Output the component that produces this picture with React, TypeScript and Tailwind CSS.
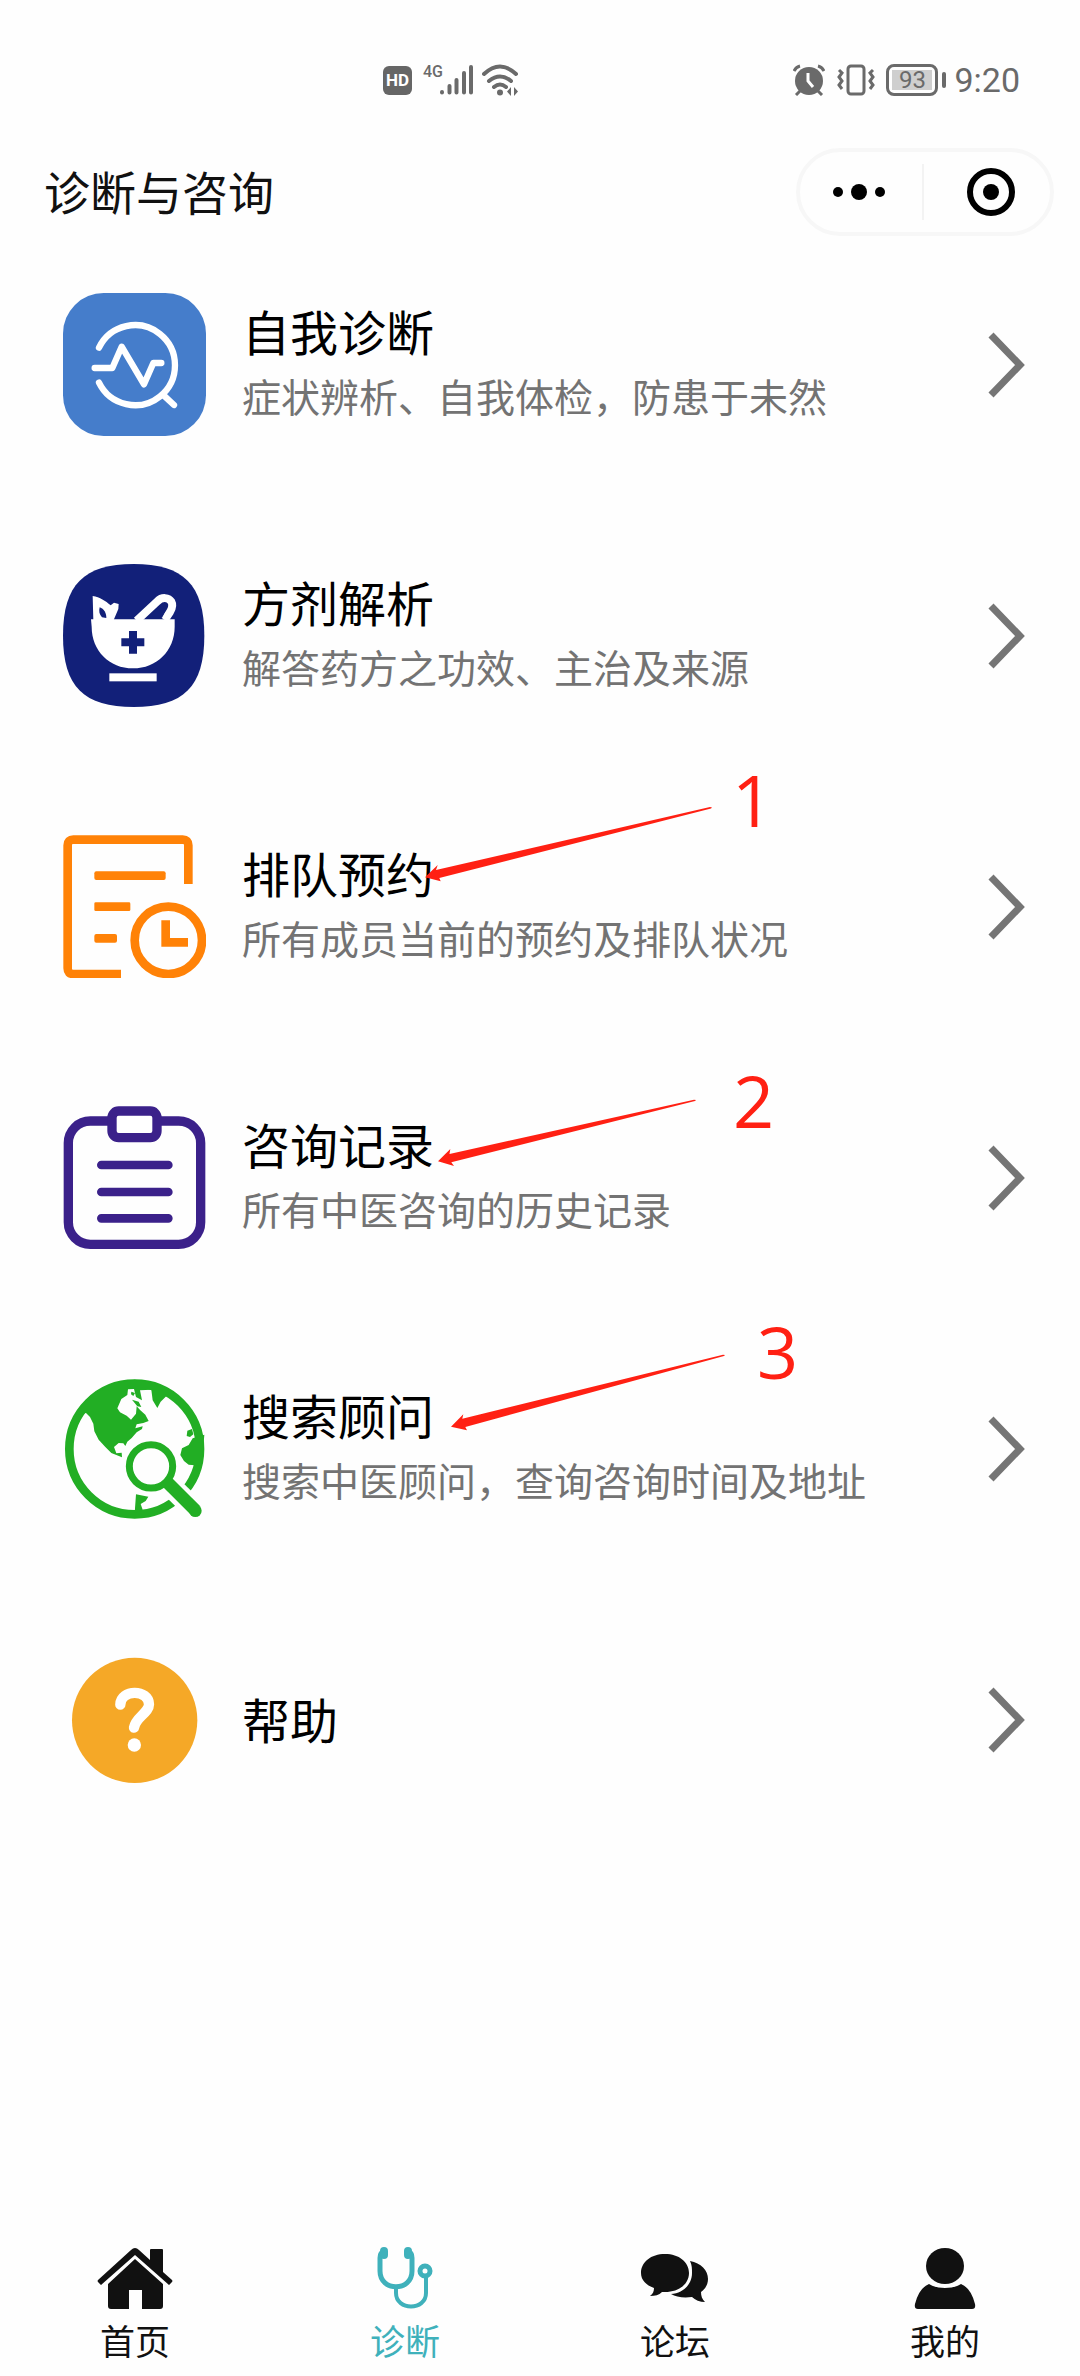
/**
 * Diagnosis & consultation page
 * Status bar, mini-program header, feature list and bottom tab bar
 */

import React from 'react';

type IconProps = { className?: string };

// ---------- feature icons ----------

const SelfCheckIcon: React.FC<IconProps> = ({ className }) => (
  <svg className={className} viewBox="69 66 429 429" fill="none" aria-hidden="true">
    <rect x="69" y="66" width="429" height="429" rx="122" fill="#457dcb" />
    <g stroke="#fff" strokeWidth="19" strokeLinecap="round" strokeLinejoin="round">
      <path d="M177 230A120 120 0 1 1 177 335" />
      <path d="M164 291H217L245 227L312 340L340 276H364" />
      <path d="M371 373L402 402" />
    </g>
  </svg>
);

const FormulaIcon: React.FC<IconProps> = ({ className }) => (
  <svg className={className} viewBox="69 70 429 429" fill="none" aria-hidden="true">
    <path
      d="M281 70C430 70 493 132 493 285S430 499 281 499S69 438 69 285S132 70 281 70Z"
      fill="#122079"
    />
    <path
      d="M153 236H404V258C404 330 350 383 279 383S155 330 155 258Z"
      fill="#fff"
    />
    <path d="M160 238L158 166C180 170 196 180 212 194L222 186L236 190L235 205L221 238Z" fill="#fff" />
    <path d="M179 200C192 205 199 216 199 232L186 230C178 222 176 212 179 200Z" fill="#122079" />
    <path
      d="M290 240L352 182C366 168 386 170 394 183C400 194 396 204 390 214L374 238"
      stroke="#fff"
      strokeWidth="24"
      strokeLinejoin="round"
    />
    <path d="M316 235L366 190C376 183 385 192 381 202L366 231Z" fill="#122079" />
    <path d="M267 271H291V293H313V317H291V339H267V317H244V293H267Z" fill="#122079" />
    <rect x="208" y="398" width="142" height="24" fill="#fff" />
  </svg>
);

const QueueIcon: React.FC<IconProps> = ({ className }) => (
  <svg className={className} viewBox="69 75 429 429" fill="none" aria-hidden="true">
    <g stroke="#ff8207" strokeWidth="26">
      <path d="M243 492H100Q83 492 83 475V106Q83 89 100 89H428Q445 89 445 106V222" />
      <circle cx="385" cy="391" r="101" />
      <path d="M377 331V397H444" />
    </g>
    <g fill="#ff8207">
      <rect x="163" y="184" width="214" height="26" rx="6" />
      <rect x="163" y="277" width="108" height="26" rx="4" />
      <rect x="163" y="372" width="68" height="26" rx="6" />
    </g>
  </svg>
);

const RecordIcon: React.FC<IconProps> = ({ className }) => (
  <svg className={className} viewBox="69 47 429 429" fill="none" aria-hidden="true">
    <g stroke="#3b218a" strokeWidth="28" strokeLinecap="round">
      <rect x="85" y="92" width="397" height="370" rx="66" />
      <rect x="216" y="62" width="135" height="80" rx="20" fill="#fff" />
      <path d="M184 224H385M184 305H385M184 384H385" strokeWidth="26" />
    </g>
  </svg>
);

const SearchGlobeIcon: React.FC<IconProps> = ({ className }) => (
  <svg className={className} viewBox="69 52 429 429" fill="none" aria-hidden="true">
    <circle cx="284" cy="268" r="196" stroke="#22ae24" strokeWidth="26" />
    <g fill="#22ae24">
      <path d="M105 165L138 160L150 172L160 192L163 215L176 240L196 262L214 280L246 293L245 279L229 281L222 262L236 250L250 251L256 259L262 246L275 235L290 218L306 208L308 200L286 206L290 194L310 190L326 184L316 165L301 152L290 140L288 162L273 180L260 168L240 158L232 146L244 118L262 106L264 89L282 88L288 112L306 122L300 92L334 90L338 122L352 145L362 126L380 108L345 70L284 60L215 72L150 110Z" />
      <path d="M274 96L285 100L280 109L273 104ZM276 120L296 126L304 142L292 140Z" />
      <path d="M493 225L458 236L446 256L426 266L421 286L432 304L446 315L485 318Z" />
      <path d="M442 213L456 208L460 224L450 232L440 229Z" />
      <path d="M288 404L325 411L317 424L302 433L308 450L284 460Z" />
    </g>
    <circle cx="333" cy="320" r="86" fill="#fefefe" />
    <path d="M370 358L500 485" stroke="#fefefe" strokeWidth="66" />
    <circle cx="333" cy="320" r="65" stroke="#22ae24" strokeWidth="21" />
    <path d="M384 370L466 452" stroke="#22ae24" strokeWidth="38" />
    <circle cx="466" cy="453" r="19" fill="#22ae24" />
  </svg>
);

const HelpIcon: React.FC<IconProps> = ({ className }) => (
  <svg className={className} viewBox="69 25 429 429" fill="none" aria-hidden="true">
    <circle cx="284" cy="242" r="188" fill="#f5a827" />
    <path
      d="M241 195C241 148 327 148 327 194C327 220 287 232 282 264"
      stroke="#fff"
      strokeWidth="31"
      strokeLinecap="round"
    />
    <circle cx="283" cy="316" r="20" fill="#fff" />
  </svg>
);

const Chevron: React.FC<IconProps> = ({ className }) => (
  <svg className={className} viewBox="0 0 40 72" fill="none" aria-hidden="true">
    <path d="M4 6L33 36L4 66" stroke="#757575" strokeWidth="7" />
  </svg>
);

// ---------- tab bar icons ----------

const HomeIcon: React.FC<IconProps> = ({ className }) => (
  <svg className={className} viewBox="0 0 80 64" fill="currentColor" aria-hidden="true">
    <path d="M40 2Q42 2 44 4L55 14V4Q55 3 56 3H67Q68 3 68 4V26L77 34Q78 35 77 36L74 39L40 9L6 39L3 36Q2 35 3 34L36 4Q38 2 40 2Z" />
    <path d="M40 13L68 38V60Q68 63 65 63H47V44H34V63H16Q13 63 13 60V38Z" />
  </svg>
);

const StethoscopeIcon: React.FC<IconProps> = ({ className }) => (
  <svg className={className} viewBox="0 0 80 64" fill="none" stroke="currentColor" aria-hidden="true">
    <g strokeWidth="5" strokeLinecap="round">
      <path d="M19 6Q15 6 15 12V25C15 46 47 46 47 25V12Q47 6 43 6" />
      <path d="M31 42V47C31 65 61 65 61 47V31" strokeWidth="4" />
      <circle cx="60" cy="25" r="5" />
    </g>
    <path d="M19 5V9M43 5V9" strokeWidth="8" strokeLinecap="round" />
  </svg>
);

const ForumIcon: React.FC<IconProps> = ({ className }) => (
  <svg className={className} viewBox="0 0 80 64" fill="currentColor" aria-hidden="true">
    <path d="M30 8C44 8 54 16 54 27S44 46 30 46H27C24 49 20 50 15 50C18 48 19 45 19 42C11 39 6 34 6 27C6 16 16 8 30 8Z" />
    <path d="M55 15C66 17 73 24 73 33C73 39 70 43 66 46C66 50 67 53 70 56C65 56 60 54 57 51C48 52 41 51 36 48C49 47 57 38 57 27C57 23 57 19 55 15Z" />
  </svg>
);

const PersonIcon: React.FC<IconProps> = ({ className }) => (
  <svg className={className} viewBox="0 0 80 64" fill="currentColor" aria-hidden="true">
    <ellipse cx="40" cy="20" rx="19" ry="18" />
    <path d="M24 38Q30 42 40 42T56 38Q66 42 70 58Q71 63 67 63H13Q9 63 10 58Q14 42 24 38Z" />
  </svg>
);

// ---------- status bar ----------

const StatusBar = () => (
  <div className="flex h-[100px] items-center justify-between pt-[60px] pr-[60px] pl-[383px] text-[#6a6a6a]">
    <div className="flex h-8 items-end">
      <span className="mb-px flex h-[29px] w-[29px] items-center justify-center rounded-md bg-[#666] font-['Roboto',sans-serif] text-[17px] font-bold text-white">
        HD
      </span>
      <span className="ml-[11px] w-[17px] self-start font-['Roboto',sans-serif] text-[16px] leading-4 font-medium">
        4G
      </span>
      <svg className="h-8 w-[34px]" viewBox="0 0 34 32" stroke="currentColor" strokeWidth="4" strokeLinecap="round" aria-hidden="true">
        <path d="M2 28V28.5M9.500 22V28.500M16.500 16V28.500M24 9V28.500M31 3V28.500" />
      </svg>
      <svg className="ml-2 h-8 w-[38px]" viewBox="0 0 38 32" fill="none" stroke="currentColor" strokeWidth="4" strokeLinecap="round" aria-hidden="true">
        <path d="M2 10Q18 -5 34 10M7 17Q18 8 29 17M12 23Q18 18 24 23" />
        <circle cx="18" cy="28.500" r="3" fill="currentColor" stroke="none" />
        <path d="M29 23L25 27.500L29 32ZM32 23L36 27.500L32 32Z" fill="currentColor" stroke="none" />
      </svg>
    </div>

    <div className="flex h-8 items-center">
      <svg className="h-8 w-8" viewBox="0 0 32 32" fill="none" stroke="currentColor" strokeWidth="3" aria-hidden="true">
        <circle cx="16" cy="17" r="14" fill="currentColor" stroke="none" />
        <path d="M1 7Q3 3 7 2M25 2Q29 3 31 7M7 27L3 31M25 27L29 31" />
        <path d="M15 9V17L20 23" stroke="#fff" />
      </svg>
      <svg className="ml-3 h-8 w-[38px]" viewBox="0 0 38 32" fill="none" stroke="currentColor" strokeWidth="3" aria-hidden="true">
        <rect x="11" y="2" width="16" height="28" rx="3" />
        <path d="M2 6L5 9L2 13L5 17L2 21L5 25M36 6L33 9L36 13L33 17L36 21L33 25" />
      </svg>
      <span className="ml-[11px] flex h-8 w-[52px] rounded-lg border-3 border-[#6a6a6a] p-[3px]">
        <span className="flex flex-1 items-center justify-center bg-[#cfcfcf] font-['Roboto',sans-serif] text-[24px] leading-5">
          93
        </span>
      </span>
      <span className="ml-1 h-4 w-1 rounded-sm bg-[#6a6a6a]" />
      <span className="ml-2 font-['Roboto',sans-serif] text-[34px] leading-8">9:20</span>
    </div>
  </div>
);

const Header = () => (
  <header className="flex items-center justify-between pt-12 pr-[26px] pb-px pl-11">
    <h1 className="pb-1 text-[46px] leading-[60px] text-[#111]">诊断与咨询</h1>
    <div className="flex h-[88px] w-[258px] items-center rounded-full border-4 border-[#f7f7f7]">
      <button type="button" aria-label="更多" className="flex flex-1 items-center justify-center gap-2 pr-1">
        <span className="h-[10px] w-[10px] rounded-full bg-black" />
        <span className="h-4 w-4 rounded-full bg-black" />
        <span className="h-[10px] w-[10px] rounded-full bg-black" />
      </button>
      <span className="h-14 w-[2px] bg-[#f3f3f3]" />
      <button type="button" aria-label="关闭" className="flex flex-1 items-center justify-center pl-2">
        <span className="flex h-12 w-12 items-center justify-center rounded-full border-6 border-black">
          <span className="h-4 w-4 rounded-full bg-black" />
        </span>
      </button>
    </div>
  </header>
);

// ---------- feature list ----------

interface Mark {
  label: string;
  labelClass: string;
  arrowClass: string;
  viewBox: string;
  points: string;
}

interface Feature {
  title: string;
  desc?: string;
  icon: React.ComponentType<IconProps>;
  mark?: Mark;
}

const FEATURES: Feature[] = [
  { title: '自我诊断', desc: '症状辨析、自我体检，防患于未然', icon: SelfCheckIcon },
  { title: '方剂解析', desc: '解答药方之功效、主治及来源', icon: FormulaIcon },
  {
    title: '排队预约',
    desc: '所有成员当前的预约及排队状况',
    icon: QueueIcon,
    mark: {
      label: '1',
      labelClass: 'left-[732px] -top-[16px]',
      arrowClass: 'left-[425px] top-[27px] w-[288px] h-[76px]',
      viewBox: '0 0 288 76',
      points: '0,71.3 12.7,59 11,64 285,1 287,1.5 286,2.5 14.3,72 15.7,75.3',
    },
  },
  {
    title: '咨询记录',
    desc: '所有中医咨询的历史记录',
    icon: RecordIcon,
    mark: {
      label: '2',
      labelClass: 'left-[733px] top-[14px]',
      arrowClass: 'left-[438px] top-[49px] w-[258px] h-[68px]',
      viewBox: '0 0 258 68',
      points: '0,62.3 12.3,50 11.500,55 256,0.7 258,1 257,2 13.3,63.3 16,67',
    },
  },
  {
    title: '搜索顾问',
    desc: '搜索中医顾问，查询咨询时间及地址',
    icon: SearchGlobeIcon,
    mark: {
      label: '3',
      labelClass: 'left-[757px] -top-[6px]',
      arrowClass: 'left-[451px] top-[33px] w-[274px] h-[77px]',
      viewBox: '0 0 274 77',
      points: '0,72.7 12.3,60.3 11.3,64.7 272,0.7 274,1 273,2 14.3,73 16,76.3',
    },
  },
  { title: '帮助', icon: HelpIcon },
];

const FeatureRow: React.FC<{ feature: Feature }> = ({ feature }) => {
  const { title, desc, icon: Icon, mark } = feature;
  return (
    <li className="relative">
      <a href="#" className="flex items-center py-14 pr-[53px] pl-[63px]">
        <Icon className="h-[143px] w-[143px] shrink-0" />
        <div className="ml-9 min-w-0 flex-1 pb-1">
          <h2 className="text-[48px] leading-[72px] text-black">{title}</h2>
          {desc && <p className="pb-2 text-[39px] leading-[58px] text-[#737373]">{desc}</p>}
        </div>
        <Chevron className="h-[72px] w-10 shrink-0" />
      </a>
      {mark && (
        <>
          <svg className={`absolute ${mark.arrowClass}`} viewBox={mark.viewBox} aria-hidden="true">
            <polygon points={mark.points} fill="#ff2013" />
          </svg>
          <span
            className={`absolute font-['Open_Sans','Noto_Sans',sans-serif] text-[72px] leading-[72px] text-[#ff2013] ${mark.labelClass}`}
          >
            {mark.label}
          </span>
        </>
      )}
    </li>
  );
};

// ---------- tab bar ----------

const TABS = [
  { label: '首页', icon: HomeIcon, active: false },
  { label: '诊断', icon: StethoscopeIcon, active: true },
  { label: '论坛', icon: ForumIcon, active: false },
  { label: '我的', icon: PersonIcon, active: false },
];

const TabBar = () => (
  <nav className="grid grid-cols-4 pb-3">
    {TABS.map(({ label, icon: Icon, active }) => (
      <a
        key={label}
        href="#"
        className={`flex flex-col items-center gap-[6px] ${active ? 'text-[#3fb1bb]' : 'text-[#111]'}`}
      >
        <Icon className="h-16 w-20" />
        <span className="text-[35px] leading-[48px]">{label}</span>
      </a>
    ))}
  </nav>
);

export default function App() {
  return (
    <div
      lang="zh-CN"
      className="flex min-h-screen flex-col bg-[#fefefe] font-['Noto_Sans_CJK_SC',sans-serif]"
    >
      <StatusBar />
      <Header />
      <main className="flex-1">
        <ul className="flex flex-col gap-4">
          {FEATURES.map((feature) => (
            <FeatureRow key={feature.title} feature={feature} />
          ))}
        </ul>
      </main>
      <TabBar />
    </div>
  );
}
